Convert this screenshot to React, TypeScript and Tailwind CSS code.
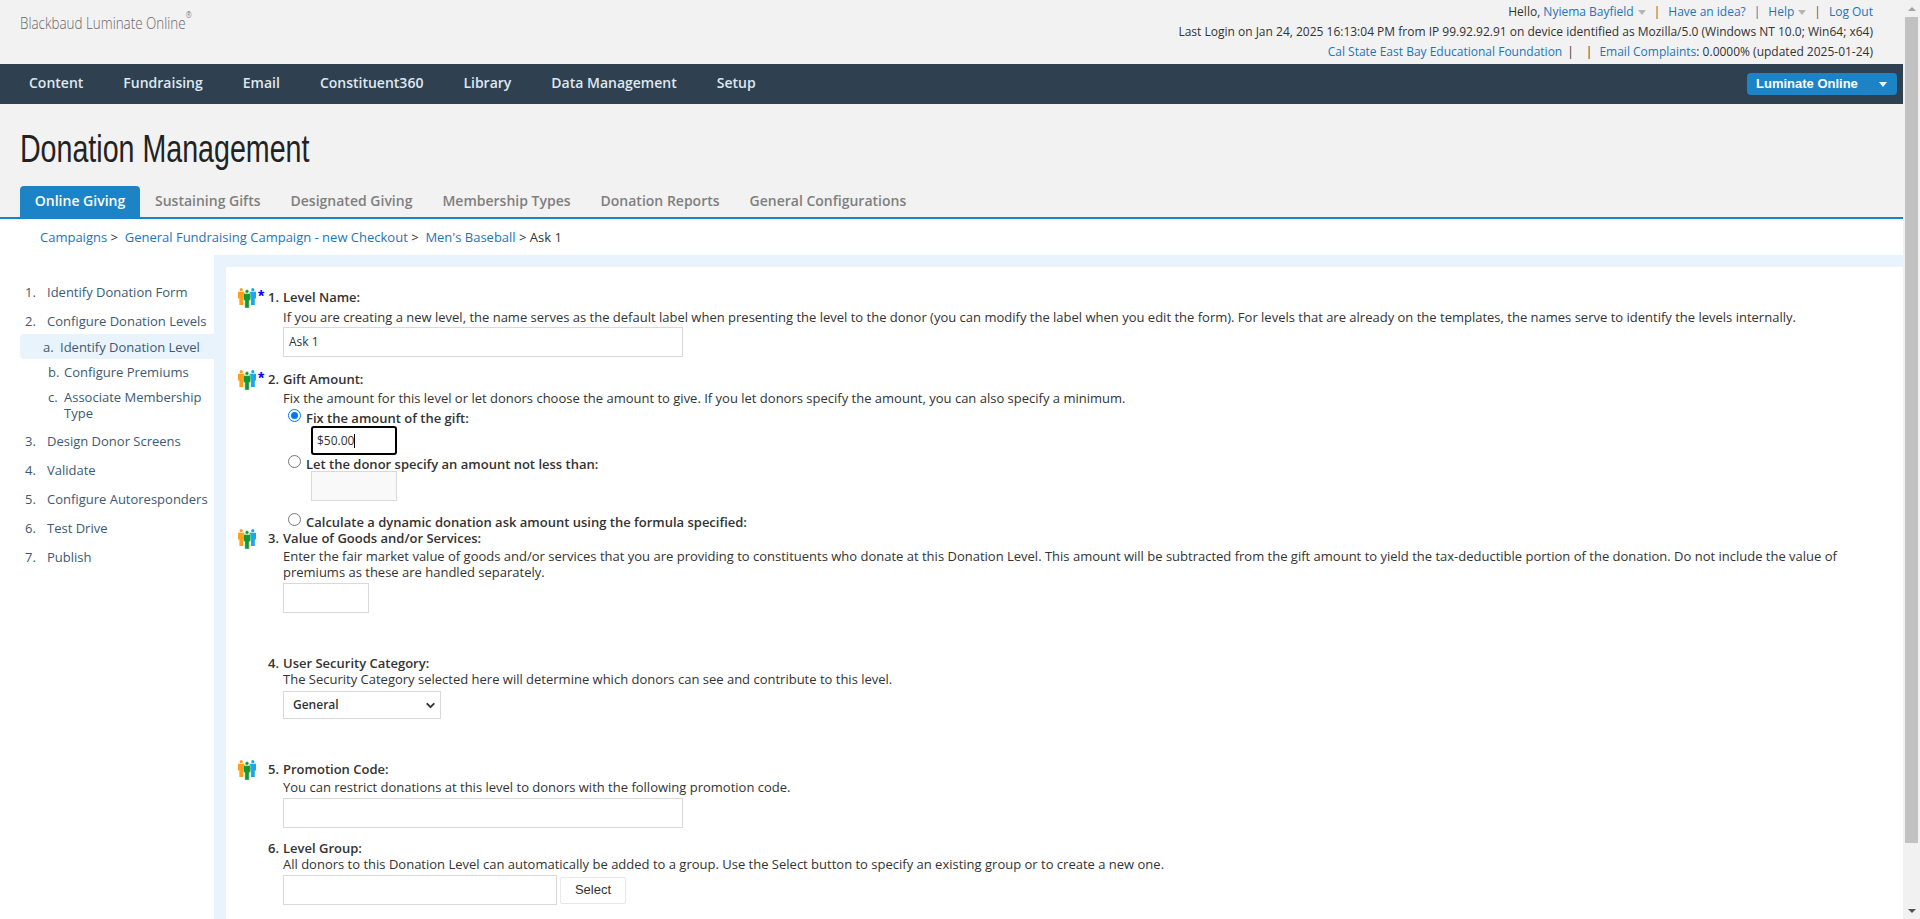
import React from 'react';
import { ChevronDown } from 'lucide-react';

const sans = "font-['Open_Sans','Liberation_Sans',sans-serif]";

const steps = [
  { n: '1.', label: 'Identify Donation Form' },
  { n: '2.', label: 'Configure Donation Levels' },
];
const subSteps = [
  { n: 'a.', label: 'Identify Donation Level', active: true },
  { n: 'b.', label: 'Configure Premiums' },
  { n: 'c.', label: 'Associate Membership Type' },
];
const laterSteps = [
  { n: '3.', label: 'Design Donor Screens' },
  { n: '4.', label: 'Validate' },
  { n: '5.', label: 'Configure Autoresponders' },
  { n: '6.', label: 'Test Drive' },
  { n: '7.', label: 'Publish' },
];

const PeopleIcon = () => (
  <svg width="18" height="20" viewBox="0 0 18 20" className="block">
    <g fill="#ff9f1c">
      <circle cx="3.2" cy="1.7" r="1.6" />
      <path d="M0 3.8h6.4v6.6H5.2V17H1.4v-6.6H0z" />
    </g>
    <g fill="#1aa7f0">
      <circle cx="14.8" cy="1.7" r="1.6" />
      <path d="M11.6 3.8H18v6.6h-1.2V17H13v-6.6h-1.4z" />
    </g>
    <g fill="#0f9a2e" stroke="#ffffff" strokeWidth="0.4">
      <circle cx="9" cy="3.4" r="1.8" />
      <path d="M5.4 5.6h7.2v6.8h-1.4V20H6.8v-7.6H5.4z" />
    </g>
  </svg>
);

const Radio = ({ checked }: { checked?: boolean }) => (
  <span
    className={
      'block w-[13px] h-[13px] mb-[4px] rounded-full border bg-white shrink-0 ' +
      (checked ? 'border-[#0075ff] p-[2px]' : 'border-[#767676]')
    }
  >
    {checked && <span className="block w-full h-full rounded-full bg-[#0075ff]" />}
  </span>
);

const Caret = () => (
  <span className="inline-block align-middle w-0 h-0 ml-[4px] border-x-[4px] border-x-transparent border-t-[5px] border-t-[#b5b5b5]" />
);

const Row = ({
  n,
  title,
  icon,
  star,
  className,
  children,
}: {
  n: string;
  title: string;
  icon?: boolean;
  star?: boolean;
  className?: string;
  children: React.ReactNode;
}) => (
  <div className={'flex ' + (className || '')}>
    <div className="w-[20px] shrink-0 -mt-[1px]">{icon && <PeopleIcon />}</div>
    <div className="w-[10px] shrink-0 text-[#0000ff] text-[16px] leading-[16px] font-bold font-['Liberation_Sans',sans-serif]">
      {star && '*'}
    </div>
    <div className="w-[15px] shrink-0 font-semibold text-[#333] leading-[17px]">{n}</div>
    <div className="flex-1 min-w-0">
      <div className="font-semibold text-[#333] leading-[17px]">{title}</div>
      {children}
    </div>
  </div>
);

const fieldClass = 'block h-[30px] border border-[#d9d9d9] bg-white';

export default function App() {
  return (
    <div className={'flex h-[919px] overflow-hidden bg-white text-[13px] leading-[16px] text-[#333] ' + sans}>
      <div className="flex-1 min-w-0 flex flex-col">
        {/* top strip */}
        <header className="h-[64px] bg-[#f2f2f2] flex justify-between pl-[20px] pr-[30px]">
          <div className="pt-[13px] text-[#666] text-[17px] leading-[20px] font-light origin-left scale-x-[0.79] whitespace-nowrap">
            Blackbaud Luminate Online<sup className="text-[9px] align-super">®</sup>
          </div>
          <div className="pt-[2px] text-[12px] leading-[20px] text-right text-[#333]">
            <div>
              Hello, <a className="text-[#1c75bc]">Nyiema Bayfield</a>
              <Caret />
              <span className="text-[#a33] mx-[8px]">|</span>
              <a className="text-[#1c75bc]">Have an idea?</a>
              <span className="text-[#1c75bc] mx-[8px]">|</span>
              <a className="text-[#1c75bc]">Help</a>
              <Caret />
              <span className="text-[#a33] mx-[8px]">|</span>
              <a className="text-[#1c75bc]">Log Out</a>
            </div>
            <div>Last Login on Jan 24, 2025 16:13:04 PM from IP 99.92.92.91 on device identified as Mozilla/5.0 (Windows NT 10.0; Win64; x64)</div>
            <div>
              <a className="text-[#1c75bc]">Cal State East Bay Educational Foundation</a>
              <span className="ml-[5px] mr-[12px]">|</span>
              <span className="mr-[7px]">|</span>
              <a className="text-[#1c75bc]">Email Complaints</a>: 0.0000% (updated 2025-01-24)
            </div>
          </div>
        </header>

        {/* main nav */}
        <nav className="h-[40px] bg-[#2f4050] flex items-center justify-between pl-[29px] pr-[6px]">
          <div className="flex gap-[40px] text-[14px] leading-[20px] pb-[2px] font-semibold text-[#dfe8f0]">
            {['Content', 'Fundraising', 'Email', 'Constituent360', 'Library', 'Data Management', 'Setup'].map((item) => (
              <a key={item}>{item}</a>
            ))}
          </div>
          <button className="w-[150px] h-[22px] rounded-[4px] bg-[#1c84c6] text-white flex items-center justify-between pl-[9px] pr-[10px] font-['Liberation_Sans',sans-serif] text-[13px] font-bold">
            Luminate Online
            <span className="w-0 h-0 border-x-[4px] border-x-transparent border-t-[5px] border-t-white" />
          </button>
        </nav>

        {/* page title + tabs */}
        <div className="h-[115px] bg-[#f2f2f2] flex flex-col justify-end border-b-2 border-[#1c84c6]">
          <h1 className="pl-[26.5px] pb-[12px] text-[#222] text-[38px] leading-[50px] origin-left scale-x-[0.753] whitespace-nowrap font-['Liberation_Sans',sans-serif]">
            Donation Management
          </h1>
          <div className="flex pl-[20px] text-[14px] leading-[20px] font-semibold text-[#7f7f7f]">
            <a className="w-[120px] h-[31px] pb-[2px] rounded-t-[4px] bg-[#1c84c6] text-white flex items-center justify-center">Online Giving</a>
            {['Sustaining Gifts', 'Designated Giving', 'Membership Types', 'Donation Reports', 'General Configurations'].map((t) => (
              <a key={t} className="px-[15px] h-[31px] pb-[2px] flex items-center">{t}</a>
            ))}
          </div>
        </div>

        {/* breadcrumb */}
        <div className="h-[36px] pl-[40px] pt-[9px] leading-[18px] text-[13px]">
          <a className="text-[#1c75bc]">Campaigns</a> &gt;&nbsp;&nbsp;
          <a className="text-[#1c75bc]">General Fundraising Campaign - new Checkout</a> &gt;&nbsp;&nbsp;
          <a className="text-[#1c75bc]">Men's Baseball</a> &gt; Ask 1
        </div>

        <div className="flex-1 flex min-h-0">
          {/* step list */}
          <aside className="w-[214px] shrink-0 pt-[29px] pl-[20px] text-[13px] text-[#3c5a73] leading-[16px]">
            {steps.map((s) => (
              <div key={s.n} className="flex pl-[5px] h-[29px]">
                <span className="w-[22px]">{s.n}</span>
                {s.label}
              </div>
            ))}
            <div className="-mt-[8px]">
              {subSteps.map((s) => (
                <div
                  key={s.n}
                  className={
                    'flex py-[4.5px] ' +
                    (s.active ? 'bg-[#e8f3fc] rounded-l-[4px] pl-[23px]' : 'pl-[28px]')
                  }
                >
                  <span className={s.active ? 'w-[17px]' : 'w-[16px]'}>{s.n}</span>
                  <span className="flex-1">{s.label}</span>
                </div>
              ))}
            </div>
            <div className="mt-[8px]">
              {laterSteps.map((s) => (
                <div key={s.n} className="flex pl-[5px] h-[29px]">
                  <span className="w-[22px]">{s.n}</span>
                  {s.label}
                </div>
              ))}
            </div>
          </aside>

          {/* form panel */}
          <main className="flex-1 min-w-0 bg-[#e8f3fc] pl-[12px] pt-[12px]">
            <div className="h-full bg-white pl-[12px] pr-[40px] pt-[22px]">
              <Row n="1." title="Level Name:" icon star>
                <p className="mt-[3px]">
                  If you are creating a new level, the name serves as the default label when presenting the level to the donor (you can modify the label when you edit the form). For levels that are already on the templates, the names serve to identify the levels internally.
                </p>
                <div className={fieldClass + ' w-[400px] mt-[2px] px-[5px] leading-[28px] text-[12px]'}>Ask 1</div>
              </Row>

              <Row n="2." title="Gift Amount:" icon star className="mt-[14px]">
                <p className="mt-[2px]">
                  Fix the amount for this level or let donors choose the amount to give. If you let donors specify the amount, you can also specify a minimum.
                </p>
                <div className="flex items-center gap-[5px] pl-[5px] mt-[3px] h-[17px] font-semibold">
                  <Radio checked />
                  Fix the amount of the gift:
                </div>
                <div className="ml-[28px] w-[86px] h-[29px] border-2 border-black rounded-[3px] pl-[4px] text-[12px] flex items-center">
                  $50.00<span className="w-px h-[14px] bg-black" />
                </div>
                <div className="flex items-center gap-[5px] pl-[5px] h-[17px] font-semibold">
                  <Radio />
                  Let the donor specify an amount not less than:
                </div>
                <div className="ml-[28px] -mt-[1px] w-[86px] h-[30px] border border-[#d9d9d9] bg-[#f9f9f9]" />
                <div className="flex items-center gap-[5px] pl-[5px] mt-[12px] h-[17px] font-semibold">
                  <Radio />
                  Calculate a dynamic donation ask amount using the formula specified:
                </div>
              </Row>

              <Row n="3." title="Value of Goods and/or Services:" icon>
                <p className="mt-[1px]">
                  Enter the fair market value of goods and/or services that you are providing to constituents who donate at this Donation Level. This amount will be subtracted from the gift amount to yield the tax-deductible portion of the donation. Do not include the value of premiums as these are handled separately.
                </p>
                <div className={fieldClass + ' w-[86px] mt-[3px]'} />
              </Row>

              <Row n="4." title="User Security Category:" className="mt-[42px]">
                <p className="-mt-[1px]">
                  The Security Category selected here will determine which donors can see and contribute to this level.
                </p>
                <div className="w-[158px] h-[28px] mt-[4px] border border-[#d9d9d9] flex items-center justify-between pl-[9px] pr-[3px] font-semibold text-[12px]">
                  General
                  <ChevronDown size={13} strokeWidth={3.5} className="text-[#333]" />
                </div>
              </Row>

              <Row n="5." title="Promotion Code:" icon className="mt-[42px]">
                <p className="mt-[1px]">
                  You can restrict donations at this level to donors with the following promotion code.
                </p>
                <div className={fieldClass + ' w-[400px] mt-[3px]'} />
              </Row>

              <Row n="6." title="Level Group:" className="mt-[12px]">
                <p className="-mt-[1px]">
                  All donors to this Donation Level can automatically be added to a group. Use the Select button to specify an existing group or to create a new one.
                </p>
                <div className="flex items-center gap-[3px] mt-[3px]">
                  <div className={fieldClass + ' w-[274px]'} />
                  <button className="w-[66px] h-[27px] rounded-[2px] border border-[#e8e8e8] bg-white font-['Liberation_Sans',sans-serif] text-[13px] text-[#333]">
                    Select
                  </button>
                </div>
              </Row>
            </div>
          </main>
        </div>
      </div>

      {/* page scrollbar as shown in the screenshot */}
      <div className="w-[17px] shrink-0 bg-[#f1f1f1] flex flex-col items-center">
        <div className="h-[17px] flex items-center justify-center">
          <span className="w-0 h-0 border-x-[4px] border-x-transparent border-b-[4px] border-b-[#a3a3a3]" />
        </div>
        <div className="w-[13px] h-[826px] bg-[#c1c1c1]" />
        <div className="flex-1 flex items-end pb-[6px]">
          <span className="w-0 h-0 border-x-[4px] border-x-transparent border-t-[4px] border-t-[#505050]" />
        </div>
      </div>
    </div>
  );
}
